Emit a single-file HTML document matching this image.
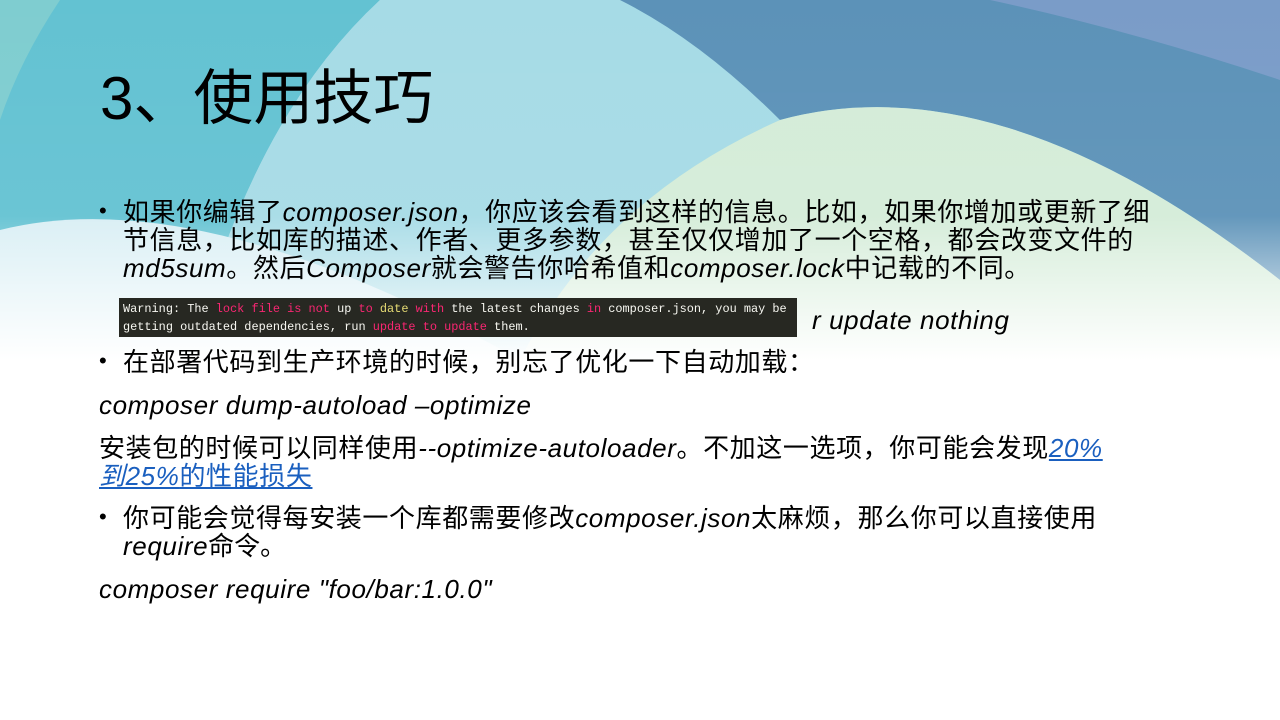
<!DOCTYPE html>
<html><head><meta charset="utf-8"><style>
body{margin:0;width:1280px;height:720px;position:relative;overflow:hidden;background:#fff;font-family:"Liberation Sans","Noto Sans CJK SC",sans-serif;color:#000}
.t{position:absolute;white-space:nowrap;font-size:26px;line-height:28px}
i{font-style:italic;letter-spacing:0.6px}
.b{position:absolute;left:99px;font-size:22px}
a{color:#1a5fbf;text-decoration:underline}
.w{position:absolute;left:119px;top:298px;width:678px;height:39px;background:#272822;color:#f8f8f2;font-family:"Liberation Mono",monospace;font-size:11.9px;line-height:18px;padding:2px 0 0 4px;box-sizing:border-box;white-space:nowrap}
.r{color:#f92672}.y{color:#e6db74}
</style></head><body>
<svg width="1280" height="720" style="position:absolute;left:0;top:0">
<defs><linearGradient id="f" x1="0" y1="0" x2="0" y2="1"><stop offset="0" stop-color="#fff" stop-opacity="0"/><stop offset="0.3" stop-color="#fff" stop-opacity="0.05"/><stop offset="0.5" stop-color="#fff" stop-opacity="1"/></linearGradient></defs>
<rect width="1280" height="360" fill="#9fd8e2"/>
<path d="M0 0H380Q250 120 190 360H0Z" fill="#63c2d2"/>
<path d="M0 0H60Q20 60 0 120Z" fill="#7fcdd0"/>
<path d="M380 0H620Q700 40 780 120Q600 200 520 360H190Q250 120 380 0Z" fill="#a6dbe6"/>
<path d="M620 0H1280V280Q1000 60 780 120Q700 40 620 0Z" fill="#5c92b8"/>
<path d="M990 0H1280V80Q1130 30 990 0Z" fill="#7a9cc8"/>
<path d="M780 120Q1000 60 1280 280V360H520Q600 200 780 120Z" fill="#d4ecd8"/>
<path d="M0 230Q200 180 520 360H0Z" fill="#d8eef4"/>
<rect width="1280" height="720" fill="url(#f)"/>
</svg>
<div class="t" style="left:100px;top:64px;font-size:60px;line-height:70px">3、使用技巧</div>
<div class="b" style="top:198px">•</div>
<div class="t" style="left:123px;top:198px;letter-spacing:0.6px">如果你编辑了<i>composer.json</i>，你应该会看到这样的信息。比如，如果你增加或更新了细</div>
<div class="t" style="left:123px;top:226px;letter-spacing:0.6px">节信息，比如库的描述、作者、更多参数，甚至仅仅增加了一个空格，都会改变文件的</div>
<div class="t" style="left:123px;top:254px;letter-spacing:0.6px"><i>md5sum</i>。然后<i>Composer</i>就会警告你哈希值和<i>composer.lock</i>中记载的不同。</div>
<div class="t" style="left:812px;top:306px"><i>r update nothing</i></div>
<div class="w">Warning: The <span class="r">lock file is not</span> up <span class="r">to</span> <span class="y">date</span> <span class="r">with</span> the latest changes <span class="r">in</span> composer.json, you may be<br>getting outdated dependencies, run <span class="r">update to update</span> them.</div>
<div class="b" style="top:348px">•</div>
<div class="t" style="left:123px;top:348px;letter-spacing:0.6px">在部署代码到生产环境的时候，别忘了优化一下自动加载：</div>
<div class="t" style="left:99px;top:391px"><i>composer dump-autoload –optimize</i></div>
<div class="t" style="left:99px;top:434px;letter-spacing:0.6px">安装包的时候可以同样使用<i>--optimize-autoloader</i>。不加这一选项，你可能会发现<a><i>20%</i></a></div>
<div class="t" style="left:99px;top:462px;letter-spacing:0.6px"><a><i>到25%</i>的性能损失</a></div>
<div class="b" style="top:504px">•</div>
<div class="t" style="left:123px;top:504px;letter-spacing:0.6px">你可能会觉得每安装一个库都需要修改<i>composer.json</i>太麻烦，那么你可以直接使用</div>
<div class="t" style="left:123px;top:532px"><i>require</i>命令。</div>
<div class="t" style="left:99px;top:575px"><i>composer require "foo/bar:1.0.0"</i></div>
</body></html>
